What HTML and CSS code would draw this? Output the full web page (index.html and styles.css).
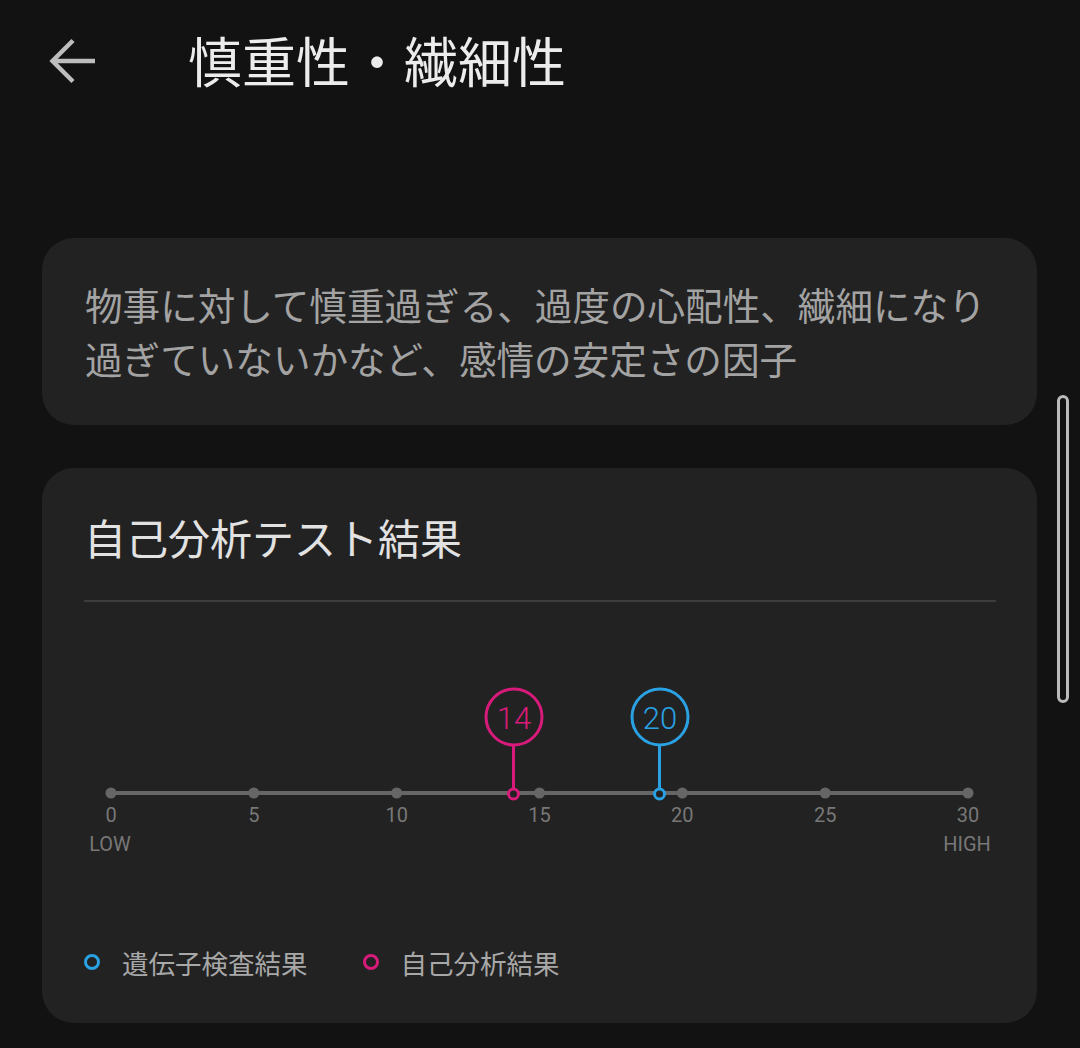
FILE: index.html
```html
<!DOCTYPE html>
<html lang="ja">

<head>
    <meta charset="UTF-8">
    <meta name="viewport" content="width=device-width, initial-scale=1.0">
    <title>慎重性・繊細性</title>
    <link rel="stylesheet" href="styles.css">
</head>

<body>
    <header class="app-bar">
        <button class="back-button" aria-label="戻る">
            <svg width="56" height="56" viewBox="0 0 56 56" fill="none" stroke="#bdbdbd" stroke-width="4.5" stroke-linecap="butt">
                <path d="M4 28 H47" />
                <path d="M25 7.5 L4.5 28 L25 48.5" />
            </svg>
        </button>
        <h1 class="app-title">慎重性・繊細性</h1>
    </header>

    <main class="content">
        <section class="card description">
            <p>物事に対して慎重過ぎる、過度の心配性、繊細になり<br>過ぎていないかなど、感情の安定さの因子</p>
        </section>

        <section class="card result">
            <h2 class="result-title">自己分析テスト結果</h2>
            <div class="divider"></div>

            <!-- score scale 0..30, markers placed on the axis -->
            <svg class="scale" width="912" height="344" viewBox="0 0 912 344">
                <line x1="27" y1="191" x2="884" y2="191" stroke="#666" stroke-width="4" />
                <g fill="#666">
                    <circle cx="27" cy="191" r="5.5" />
                    <circle cx="169.8" cy="191" r="5.5" />
                    <circle cx="312.7" cy="191" r="5.5" />
                    <circle cx="455.5" cy="191" r="5.5" />
                    <circle cx="598.3" cy="191" r="5.5" />
                    <circle cx="741.2" cy="191" r="5.5" />
                    <circle cx="884" cy="191" r="5.5" />
                </g>
                <g class="tick-label" text-anchor="middle">
                    <text x="27" y="220">0</text>
                    <text x="169.8" y="220">5</text>
                    <text x="312.7" y="220">10</text>
                    <text x="455.5" y="220">15</text>
                    <text x="598.3" y="220">20</text>
                    <text x="741.2" y="220">25</text>
                    <text x="884" y="220">30</text>
                    <text x="26" y="249">LOW</text>
                    <text x="883" y="249">HIGH</text>
                </g>

                <!-- self analysis -->
                <g class="marker self">
                    <circle cx="430" cy="115" r="28" />
                    <line x1="429.5" y1="143" x2="429.5" y2="186" />
                    <circle cx="429.5" cy="192" r="5" />
                    <text x="430" y="126.5" text-anchor="middle">14</text>
                </g>

                <!-- genetic test -->
                <g class="marker gene">
                    <circle cx="576" cy="115" r="28" />
                    <line x1="575.5" y1="143" x2="575.5" y2="186" />
                    <circle cx="575.5" cy="192" r="5" />
                    <text x="576" y="126.5" text-anchor="middle">20</text>
                </g>
            </svg>

            <ul class="legend">
                <li><span class="legend-dot gene"></span>遺伝子検査結果</li>
                <li><span class="legend-dot self"></span>自己分析結果</li>
            </ul>
        </section>
    </main>

    <div class="scroll-thumb"></div>
</body>

</html>
```

FILE: styles.css
```css
body {
    margin: 0;
    background-color: #121212;
    font-family: "Noto Sans CJK JP", "Noto Sans", sans-serif;
    position: relative;
    min-height: 1048px;
}

.app-bar {
    height: 122px;
    display: flex;
    align-items: center;
}

.back-button {
    margin-left: 48px;
    padding: 0;
    border: 0;
    background: none;
    display: flex;
}

.app-title {
    margin: -2px 0 0 84px;
    font-size: 54px;
    font-weight: 400;
    color: #ececec;
    line-height: 1;
}

.content {
    margin-top: 116px;
    padding: 0 43px 0 42px;
    display: flex;
    flex-direction: column;
    gap: 43px;
}

.card {
    background-color: #222;
    border-radius: 32px;
}

.description {
    height: 187px;
    padding: 0 42px 2px 43px;
    box-sizing: border-box;
    display: flex;
    align-items: center;
}

.description p {
    margin: 0;
    font-size: 37.6px;
    line-height: 54px;
    color: #a3a3a3;
}

.result {
    height: 555px;
    box-sizing: border-box;
    padding: 39px 41px 0 42px;
}

.result-title {
    margin: 0 0 33px;
    font-size: 42px;
    font-weight: 400;
    line-height: 60px;
    color: #e2e2e2;
}

.divider {
    height: 2px;
    background-color: #3d3d3d;
}

.scale {
    display: block;
    font-family: Roboto, "Liberation Sans", sans-serif;
}

.tick-label {
    font-size: 20px;
    fill: #777;
}

.marker circle,
.marker line {
    fill: #222;
    stroke-width: 3;
}

.marker text {
    font-size: 31px;
    font-weight: 300;
}

.marker.self circle,
.marker.self line {
    stroke: #d81b7a;
}

.marker.self text {
    fill: #d81b7a;
}

.marker.gene circle,
.marker.gene line {
    stroke: #29a1e2;
}

.marker.gene text {
    fill: #29a1e2;
}

.legend {
    list-style: none;
    margin: -3px 0 0;
    padding: 0;
    height: 38px;
    display: flex;
    align-items: center;
    gap: 55px;
}

.legend li {
    display: flex;
    align-items: center;
    font-size: 26.5px;
    color: #a8a8a8;
}

.legend-dot {
    width: 10px;
    height: 10px;
    border-radius: 50%;
    border: 3px solid;
    margin-right: 22px;
}

.legend-dot.gene {
    border-color: #29a1e2;
}

.legend-dot.self {
    border-color: #d81b7a;
}

.scroll-thumb {
    position: absolute;
    left: 1057px;
    top: 395px;
    width: 6px;
    height: 302px;
    border: 3px solid #bbb;
    border-radius: 8px;
}
```
